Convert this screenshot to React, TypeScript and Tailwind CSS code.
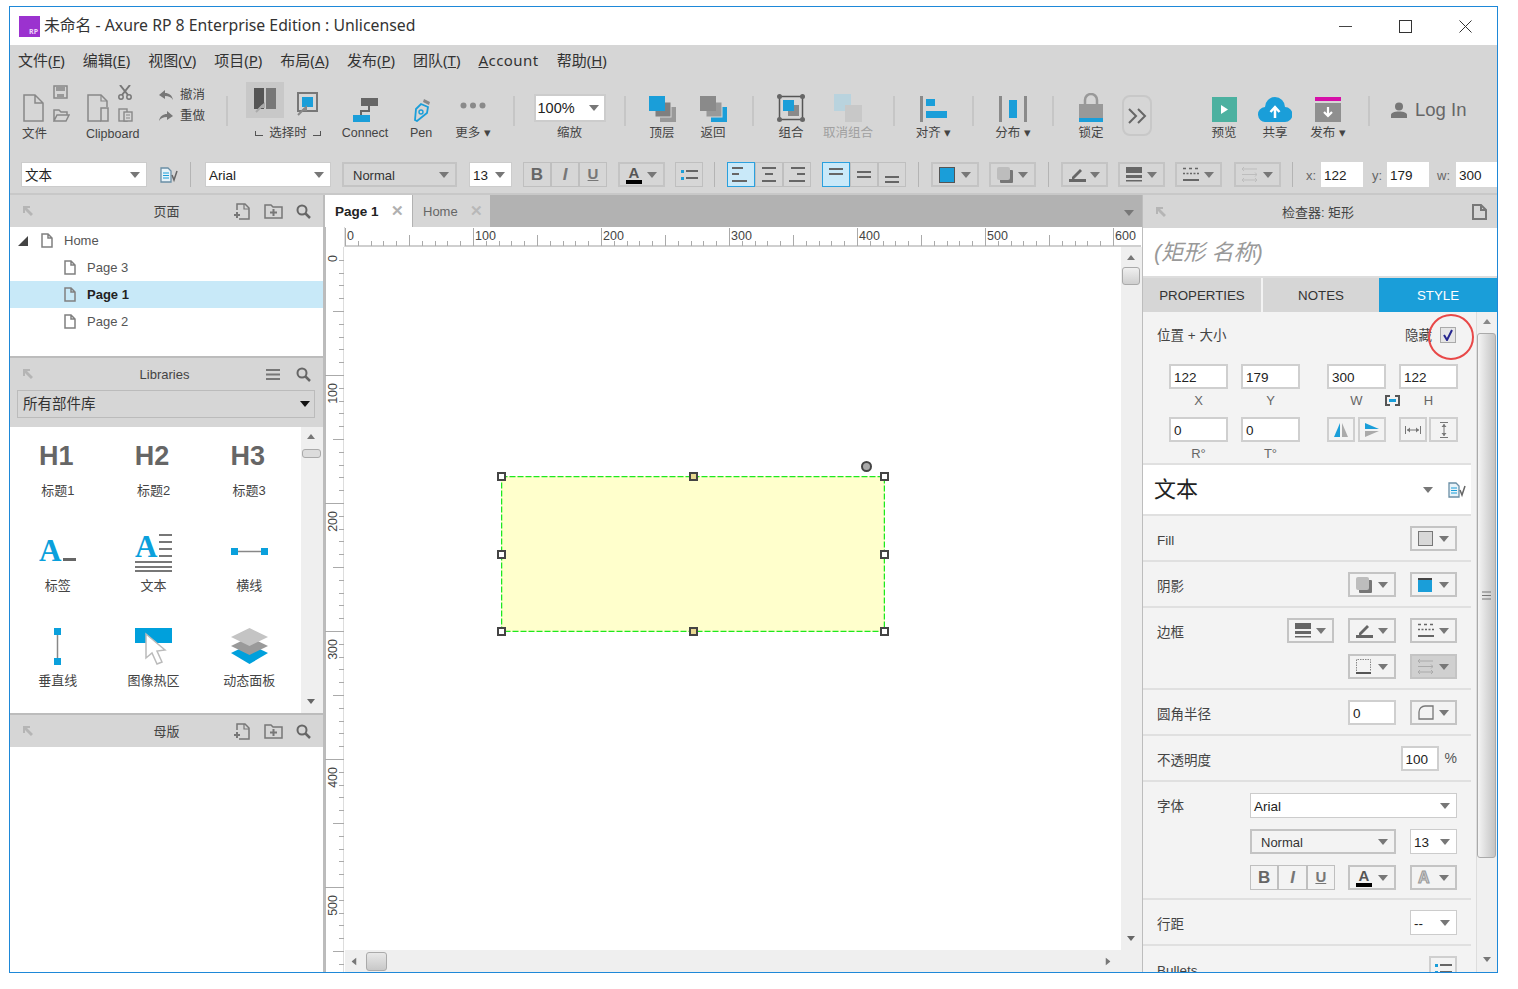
import React from 'react';

const BLUE = '#1a9ed9';

function Tri({ color = '#777', small }: { color?: string; small?: boolean }) {
  const w = small ? 8 : 10;
  const h = small ? 5 : 6;
  return (
    <svg width={w} height={h} viewBox={`0 0 ${w} ${h}`} className="shrink-0">
      <path d={`M0 0h${w}L${w / 2} ${h}z`} fill={color} />
    </svg>
  );
}

function Icon({ w, h, children }: { w: number; h: number; children: React.ReactNode }) {
  return (
    <svg width={w} height={h} viewBox={`0 0 ${w} ${h}`} className="shrink-0 block">
      {children}
    </svg>
  );
}

function PageIcon({ w = 12, h = 15, color = '#808080', sw = 1.5 }: { w?: number; h?: number; color?: string; sw?: number }) {
  const fold = Math.round(w * 0.36);
  return (
    <Icon w={w} h={h}>
      <path
        d={`M1 1H${w - fold - 1}L${w - 1} ${fold + 1}V${h - 1}H1Z M${w - fold - 1} 1V${fold + 1}H${w - 1}`}
        fill="none"
        stroke={color}
        strokeWidth={sw}
      />
    </Icon>
  );
}

function Pin() {
  return (
    <Icon w={12} h={12}>
      <path d="M1 1h7v2H5l6 6-2 2-6-6v3H1z" fill="#b5b5b5" />
    </Icon>
  );
}

function AddPage() {
  return (
    <Icon w={16} h={17}>
      <path d="M3 7V1h8l4 4v11H5" fill="none" stroke="#777" strokeWidth="1.5" />
      <path d="M10 1v5h5" fill="none" stroke="#777" strokeWidth="1.2" />
      <path d="M3 9v6M0 12h6" stroke="#777" strokeWidth="2" />
    </Icon>
  );
}

function AddFolder() {
  return (
    <Icon w={19} h={16}>
      <path d="M1 2h6l2 2h9v11H1z" fill="none" stroke="#777" strokeWidth="1.5" />
      <path d="M9.5 6v7M6 9.5h7" stroke="#777" strokeWidth="2" />
    </Icon>
  );
}

function Search() {
  return (
    <Icon w={15} h={15}>
      <circle cx="6" cy="6" r="4.5" fill="none" stroke="#666" strokeWidth="2" />
      <path d="M9.5 9.5L14 14" stroke="#666" strokeWidth="2.5" />
    </Icon>
  );
}

function PanelHeader({ title, right, className }: { title: string; right: React.ReactNode; className: string }) {
  return (
    <div className={`grid grid-cols-[1fr_auto_1fr] items-center bg-[#d6d6d6] shrink-0 ${className}`}>
      <div className="pl-[12px]">
        <Pin />
      </div>
      <div className="text-[13px] text-[#444] pt-[2px]">{title}</div>
      <div className="flex items-center justify-end">{right}</div>
    </div>
  );
}

function EditDoc() {
  return (
    <Icon w={18} h={16}>
      <path d="M1 1h7l3 3v11H1z" fill="#e8f3f9" stroke="#6a8ea5" strokeWidth="1.3" />
      <path d="M3 6h6M3 8.5h6M3 11h6" stroke={BLUE} strokeWidth="1" />
      <path d="M12 8l2 5 3-9" fill="none" stroke="#666" strokeWidth="1.5" />
    </Icon>
  );
}

// toolbar cell: icon on top, caption below
function Tool({ className, label, dim, children }: { className: string; label: string; dim?: boolean; children: React.ReactNode }) {
  return (
    <div className={`flex flex-col items-center shrink-0 ${className}`}>
      <div className="h-[38px] flex items-end justify-center">{children}</div>
      <div className={`h-[20px] pt-[2px] flex items-center whitespace-nowrap text-[12.5px] ${dim ? 'text-[#a0a0a0]' : 'text-[#444]'}`}>{label}</div>
    </div>
  );
}

function Sep({ className }: { className: string }) {
  return <div className={`w-[2px] h-[30px] mt-[12px] bg-[#c6c6c6] shrink-0 ${className}`} />;
}

function FmtSep({ className }: { className: string }) {
  return <div className={`w-[1px] h-[25px] bg-[#b4b4b4] shrink-0 ${className}`} />;
}

function Drop({ className, children, bg = '' }: { className: string; children: React.ReactNode; bg?: string }) {
  return (
    <div className={`h-[25px] flex items-center justify-between pl-[6px] pr-[6px] border-2 border-[#c4c4c4] shrink-0 ${bg} ${className}`}>
      {children}
      <Tri />
    </div>
  );
}

function Sel({ className, text }: { className: string; text: string }) {
  return (
    <div className={`h-[25px] flex items-center justify-between pl-[3px] pr-[6px] bg-white border border-[#ccc] shrink-0 text-[13.5px] text-[#222] ${className}`}>
      <span className="pt-[3px]">{text}</span>
      <Tri />
    </div>
  );
}

function Seg({ className, children, active }: { className?: string; children: React.ReactNode; active?: boolean }) {
  return (
    <div
      className={`h-[25px] flex items-center justify-center flex-1 border ${
        active ? 'border-[#2aa0de] bg-[#c9e9f9]' : 'border-[#bfbfbf]'
      } ${className ?? ''}`}
    >
      {children}
    </div>
  );
}

function Bius() {
  return (
    <>
      <Seg><span className="font-bold text-[17px] text-[#666]">B</span></Seg>
      <Seg><span className="font-bold italic text-[17px] text-[#777]">I</span></Seg>
      <Seg><span className="font-bold text-[15px] text-[#777] underline">U</span></Seg>
    </>
  );
}

function FontColor() {
  return (
    <div className="flex flex-col items-center leading-none">
      <span className="font-bold text-[15px] text-[#555] leading-[14px]">A</span>
      <span className="w-[16px] h-[4px] bg-black" />
    </div>
  );
}

function AlignLines({ lines }: { lines: [number, number, number][] }) {
  return (
    <Icon w={18} h={17}>
      {lines.map(([x, y, w], i) => (
        <rect key={i} x={x} y={y} width={w} height="2" fill="#666" />
      ))}
    </Icon>
  );
}

function Bullets() {
  return (
    <Icon w={17} h={12}>
      <rect x="0" y="1" width="3" height="3" fill={BLUE} />
      <rect x="0" y="8" width="3" height="3" fill={BLUE} />
      <rect x="5" y="1" width="12" height="2" fill="#666" />
      <rect x="5" y="8" width="12" height="2" fill="#666" />
    </Icon>
  );
}

function ShadowSq() {
  return (
    <Icon w={16} h={16}>
      <rect x="3" y="3" width="13" height="13" rx="1" fill="#777" />
      <rect x="0" y="0" width="13" height="13" rx="2" fill="#bdbdbd" />
    </Icon>
  );
}

function LineColor() {
  return (
    <Icon w={17} h={15}>
      <path d="M3 10L11 2l2 2-8 8H3z" fill="#666" />
      <rect x="0" y="12" width="17" height="3" fill="#666" />
    </Icon>
  );
}

function Thick() {
  return (
    <Icon w={16} h={15}>
      <rect x="0" y="0" width="16" height="6" fill="#666" />
      <rect x="0" y="8" width="16" height="3" fill="#666" />
      <rect x="0" y="13" width="16" height="1.5" fill="#666" />
    </Icon>
  );
}

function Dotted() {
  return (
    <Icon w={16} h={15}>
      <path d="M0 1.500h16" stroke="#666" strokeWidth="1.500" strokeDasharray="3 3" />
      <path d="M0 6.500h16" stroke="#666" strokeWidth="1.500" strokeDasharray="2 1.500" />
      <rect x="0" y="12" width="16" height="2" fill="#666" />
    </Icon>
  );
}

function ArrowLines({ color = '#bdbdbd' }: { color?: string }) {
  return (
    <Icon w={15} h={15}>
      <path d="M0 2h15M0 7.500h15M0 13h15" stroke={color} strokeWidth="1" />
      <path d="M2 0L0 2l2 2M13 5.500l2 2-2 2M2 11l-2 2 2 2M13 11l2 2-2 2" fill="none" stroke={color} strokeWidth="1" />
    </Icon>
  );
}

function MenuBar() {
  const items: [string, string, string][] = [
    ['文件(', 'F', ')'],
    ['编辑(', 'E', ')'],
    ['视图(', 'V', ')'],
    ['项目(', 'P', ')'],
    ['布局(', 'A', ')'],
    ['发布(', 'P', ')'],
    ['团队(', 'T', ')'],
  ];
  return (
    <div className="h-[30px] bg-[#d6d6d6] flex items-center gap-[18px] pl-[8px] text-[15px] text-[#333] shrink-0 font-['Noto_Sans','Noto_Sans_CJK_SC',sans-serif]">
      {items.map(([a, b, c], i) => (
        <span key={i}>
          {a}
          <span className="underline">{b}</span>
          {c}
        </span>
      ))}
      <span className="tracking-[0.45px]">
        <span className="underline">A</span>ccount
      </span>
      <span>
        帮助(<span className="underline">H</span>)
      </span>
    </div>
  );
}

function Toolbar() {
  return (
    <div className="h-[80px] bg-[#d6d6d6] flex items-start pt-[9px] shrink-0">
      {/* file */}
      <div className="w-[68px] pl-[13px] shrink-0">
        <div className="h-[38px] flex items-end gap-[9px]">
          <PageIcon w={21} h={28} color="#888" />
          <div className="flex flex-col gap-[10px]">
            <Icon w={15} h={14}>
              <path d="M1 1h13v12H1z" fill="none" stroke="#888" strokeWidth="1.5" />
              <rect x="3" y="1" width="9" height="5" fill="#999" />
              <rect x="4" y="9" width="7" height="3" fill="#999" />
            </Icon>
            <Icon w={17} h={13}>
              <path d="M1 12V1h5l2 2h6v3M1 12l3-6h12l-3 6z" fill="none" stroke="#888" strokeWidth="1.5" />
            </Icon>
          </div>
        </div>
        <div className="h-[20px] flex items-center text-[12.5px] text-[#444] -ml-[1px] pt-[5px]">文件</div>
      </div>
      {/* clipboard */}
      <div className="w-[67px] pl-[9px] shrink-0">
        <div className="h-[38px] flex items-end gap-[9px]">
          <Icon w={22} h={28}>
            <path d="M14 27H1V1H14L20 7V13" fill="none" stroke="#888" strokeWidth="1.500" />
            <path d="M14 1V7H20" fill="none" stroke="#888" strokeWidth="1.200" />
            <rect x="14" y="14" width="7" height="13" fill="none" stroke="#888" strokeWidth="1.500" />
          </Icon>
          <div className="flex flex-col gap-[8px]">
            <Icon w={14} h={15}>
              <path d="M2 0l8 10M12 0L4 10" stroke="#777" strokeWidth="2" />
              <circle cx="3" cy="12" r="2.200" fill="none" stroke="#777" strokeWidth="1.500" />
              <circle cx="11" cy="12" r="2.200" fill="none" stroke="#777" strokeWidth="1.500" />
            </Icon>
            <Icon w={15} h={14}>
              <rect x="1" y="1" width="8" height="12" fill="none" stroke="#888" strokeWidth="1.400" />
              <rect x="6" y="4" width="8" height="9" fill="#d6d6d6" stroke="#888" strokeWidth="1.400" />
              <path d="M8 7h4M8 10h4" stroke="#888" />
            </Icon>
          </div>
        </div>
        <div className="h-[20px] flex items-center text-[12.5px] text-[#444] -ml-[1px] pt-[5px] whitespace-nowrap">Clipboard</div>
      </div>
      {/* undo redo */}
      <div className="w-[81px] pl-[14px] pt-[4px] flex flex-col gap-[6px] shrink-0 text-[12.5px] text-[#444]">
        <div className="flex items-center gap-[7px] h-[15px]">
          <Icon w={14} h={11}>
            <path d="M0 5L6 0v3c4 0 7 2 8 7-2-3-4-4-8-4v3z" fill="#777" />
          </Icon>
          <span>撤消</span>
        </div>
        <div className="flex items-center gap-[7px] h-[15px]">
          <Icon w={14} h={11}>
            <path d="M14 5L8 0v3C4 3 1 5 0 10c2-3 4-4 8-4v3z" fill="#777" />
          </Icon>
          <span>重做</span>
        </div>
      </div>
      <Sep className="mt-[12px]" />
      {/* selection mode */}
      <div className="w-[84px] ml-[18px] flex flex-col shrink-0 -mt-[6px]">
        <div className="h-[44px] flex items-center">
          <div className="w-[38px] h-[36px] bg-[#c8c8c8] flex items-center justify-center">
            <Icon w={22} h={25}>
              <rect x="0" y="0" width="10" height="21" fill="#555" />
              <rect x="12" y="0" width="10" height="21" fill="#777" />
              <path d="M2 24l7-7" stroke="#aaa" strokeWidth="2" />
              <path d="M11 14v6h-6z" fill="#aaa" />
            </Icon>
          </div>
          <div className="ml-[13px] mt-[8px]">
            <Icon w={21} h={24}>
              <rect x="1" y="1" width="19" height="18" fill="none" stroke="#777" strokeWidth="2" />
              <rect x="5" y="5" width="11" height="10" fill={BLUE} />
              <path d="M1 23l7-7" stroke="#888" strokeWidth="2" />
              <path d="M10 13v6H4z" fill="#888" />
            </Icon>
          </div>
        </div>
        <div className="h-[20px] pt-[2px] flex items-center justify-center gap-[6px] text-[12.5px] text-[#444]">
          <span className="w-[8px] h-[5px] border-l border-b border-[#555]" />
          <span>选择时</span>
          <span className="w-[8px] h-[5px] border-r border-b border-[#555]" />
        </div>
      </div>
      <Tool className="w-[70px]" label="Connect">
        <Icon w={25} h={24}>
          <rect x="8" y="0" width="17" height="8" fill="#666" />
          <rect x="0" y="17" width="17" height="7" fill={BLUE} />
          <path d="M16 8v5H8v4" fill="none" stroke="#666" strokeWidth="2" />
        </Icon>
      </Tool>
      <Tool className="w-[42px]" label="Pen">
        <Icon w={19} h={24}>
          <path d="M12 1l6 3-1 3-6-3z" fill="#888" />
          <path d="M9 6l7 3-1 6-10 8-2-1 1-11z" fill="none" stroke={BLUE} strokeWidth="1.800" />
          <circle cx="9" cy="14" r="2" fill="none" stroke={BLUE} strokeWidth="1.400" />
        </Icon>
      </Tool>
      <Tool className="w-[62px]" label="更多 ▾">
        <div className="pb-[13px]">
          <Icon w={26} h={7}>
            <circle cx="3.500" cy="3.500" r="3" fill="#8a8a8a" />
            <circle cx="13" cy="3.500" r="3" fill="#8a8a8a" />
            <circle cx="22.500" cy="3.500" r="3" fill="#8a8a8a" />
          </Icon>
        </div>
      </Tool>
      <Sep className="ml-[9px]" />
      <Tool className="w-[109px]" label="缩放">
        <div className="w-[72px] h-[28px] bg-white border-2 border-[#ccc] flex items-center justify-between pl-[2px] pr-[5px] text-[14.5px] text-[#222]">
          <span className="pt-[2px]">100%</span>
          <Tri />
        </div>
      </Tool>
      <Sep className="" />
      <Tool className="w-[72px]" label="顶层">
        <Icon w={27} h={26}>
          <rect x="11" y="11" width="16" height="15" fill="#999" />
          <rect x="6" y="6" width="16" height="15" fill="#7f7f7f" stroke="#d6d6d6" />
          <rect x="0" y="0" width="16" height="15" fill={BLUE} />
        </Icon>
      </Tool>
      <Tool className="w-[30px]" label="返回">
        <Icon w={27} h={26}>
          <rect x="11" y="11" width="16" height="15" fill={BLUE} />
          <rect x="6" y="6" width="16" height="15" fill="#999" stroke="#d6d6d6" />
          <rect x="0" y="0" width="16" height="15" fill="#8a8a8a" />
        </Icon>
      </Tool>
      <Sep className="ml-[24px]" />
      <Tool className="w-[74px]" label="组合">
        <Icon w={28} h={28}>
          <rect x="2.500" y="2.500" width="23" height="23" fill="none" stroke="#555" strokeWidth="1.500" />
          <circle cx="2.500" cy="2.500" r="2.500" fill="#666" />
          <circle cx="25.500" cy="2.500" r="2.500" fill="#666" />
          <circle cx="2.500" cy="25.500" r="2.500" fill="#666" />
          <circle cx="25.500" cy="25.500" r="2.500" fill="#666" />
          <rect x="11" y="11" width="11" height="11" fill="#8a8a8a" />
          <rect x="6" y="6" width="11" height="11" fill={BLUE} />
        </Icon>
      </Tool>
      <Tool className="w-[40px]" label="取消组合" dim>
        <Icon w={29} h={28}>
          <rect x="0" y="0" width="17" height="17" fill="#b9d3de" />
          <rect x="11" y="11" width="17" height="17" fill="#c8c8c8" />
        </Icon>
      </Tool>
      <Sep className="ml-[25px]" />
      <Tool className="w-[77px]" label="对齐 ▾">
        <Icon w={27} h={26}>
          <rect x="0" y="0" width="3" height="26" fill="#8a8a8a" />
          <rect x="6" y="3" width="9" height="7" fill={BLUE} />
          <rect x="6" y="15" width="21" height="7" fill={BLUE} />
        </Icon>
      </Tool>
      <Sep className="" />
      <Tool className="w-[78px]" label="分布 ▾">
        <Icon w={28} h={26}>
          <rect x="0" y="0" width="3" height="26" fill="#8a8a8a" />
          <rect x="10" y="4" width="8" height="18" fill={BLUE} />
          <rect x="25" y="0" width="3" height="26" fill="#8a8a8a" />
        </Icon>
      </Tool>
      <Sep className="" />
      <Tool className="w-[36px] ml-[19px]" label="锁定">
        <Icon w={24} h={29}>
          <path d="M6 12V7a6 6 0 0112 0v5" fill="none" stroke="#999" strokeWidth="2.500" />
          <rect x="0" y="11" width="24" height="14" fill="#999" />
          <rect x="0" y="25" width="24" height="4" fill={BLUE} />
        </Icon>
      </Tool>
      <div className="w-[30px] h-[41px] ml-[13px] mt-[11px] rounded-[8px] border-2 border-[#c8c8c8] flex items-center justify-center shrink-0">
        <Icon w={19} h={16}>
          <path d="M1 1l7 7-7 7M10 1l7 7-7 7" fill="none" stroke="#666" strokeWidth="2" />
        </Icon>
      </div>
      <Tool className="w-[40px] ml-[52px]" label="预览">
        <Icon w={25} h={25}>
          <rect width="25" height="25" fill="#4cb1a0" />
          <path d="M9 8l7 4.500L9 17z" fill="#fff" />
        </Icon>
      </Tool>
      <Tool className="w-[62px]" label="共享">
        <Icon w={34} h={25}>
          <path d="M8 25a7.500 7.500 0 01-1-15 10 10 0 0120 0 7.500 7.500 0 010 15z" fill={BLUE} />
          <path d="M17 21V11M12.500 15l4.500-5 4.500 5" fill="none" stroke="#fff" strokeWidth="2.500" />
        </Icon>
      </Tool>
      <Tool className="w-[44px]" label="发布 ▾">
        <Icon w={26} h={25}>
          <rect width="26" height="4" fill="#d60fa8" />
          <rect y="6" width="26" height="19" fill="#8f8f8f" />
          <path d="M13 10v9M9 15l4 4 4-4" fill="none" stroke="#fff" strokeWidth="2.200" />
        </Icon>
      </Tool>
      <Sep className="ml-[18px]" />
      <div className="ml-[21px] mt-[12px] flex items-center gap-[8px] text-[18.5px] text-[#666] shrink-0">
        <Icon w={16} h={16}>
          <circle cx="8" cy="4.500" r="4" fill="#777" />
          <path d="M0 16v-3c0-2 3-3.500 8-3.500s8 1.500 8 3.500v3z" fill="#777" />
        </Icon>
        <span>Log In</span>
      </div>
    </div>
  );
}

function FormatBar() {
  return (
    <div className="h-[40px] bg-[#d6d6d6] flex items-start pt-[7px] shrink-0 text-[#222] border-b-2 border-[#c8c8c8]">
      <Sel className="w-[126px] ml-[11px]" text="文本" />
      <div className="ml-[13px] mt-[5px] shrink-0">
        <EditDoc />
      </div>
      <FmtSep className="ml-[12px]" />
      <Sel className="w-[126px] ml-[14px]" text="Arial" />
      <Drop className="w-[115px] ml-[11px] text-[13px] text-[#333]">
        <span className="pl-[3px] pt-[3px]">Normal</span>
      </Drop>
      <Sel className="w-[43px] ml-[12px]" text="13" />
      <div className="w-[84px] ml-[11px] flex shrink-0">
        <Bius />
      </div>
      <Drop className="w-[47px] ml-[11px]">
        <FontColor />
      </Drop>
      <div className="w-[28px] ml-[10px] flex shrink-0">
        <Seg><Bullets /></Seg>
      </div>
      <FmtSep className="ml-[11px]" />
      <div className="w-[84px] ml-[12px] flex shrink-0">
        <Seg active><AlignLines lines={[[0, 1, 11], [0, 7, 7], [0, 14, 15]]} /></Seg>
        <Seg><AlignLines lines={[[2, 1, 14], [5, 7, 8], [2, 14, 14]]} /></Seg>
        <Seg><AlignLines lines={[[3, 1, 14], [9, 7, 8], [1, 14, 16]]} /></Seg>
      </div>
      <div className="w-[84px] ml-[11px] flex shrink-0">
        <Seg active><AlignLines lines={[[2, 2, 14], [2, 7, 14]]} /></Seg>
        <Seg><AlignLines lines={[[2, 5, 14], [2, 10, 14]]} /></Seg>
        <Seg><AlignLines lines={[[2, 10, 14], [2, 15, 14]]} /></Seg>
      </div>
      <FmtSep className="ml-[12px]" />
      <Drop className="w-[48px] ml-[12px]">
        <span className="w-[16px] h-[16px] bg-[#1a9ed9] border border-[#555]" />
      </Drop>
      <Drop className="w-[47px] ml-[10px]">
        <ShadowSq />
      </Drop>
      <FmtSep className="ml-[12px]" />
      <Drop className="w-[47px] ml-[12px]">
        <LineColor />
      </Drop>
      <Drop className="w-[47px] ml-[10px]">
        <Thick />
      </Drop>
      <Drop className="w-[47px] ml-[10px]">
        <Dotted />
      </Drop>
      <Drop className="w-[47px] ml-[12px]">
        <ArrowLines />
      </Drop>
      <FmtSep className="ml-[11px]" />
      <span className="w-[15px] ml-[13px] h-[25px] pt-[3px] flex items-center text-[13px] text-[#666] shrink-0">x:</span>
      <div className="w-[42px] h-[25px] bg-white pl-[3px] pt-[3px] flex items-center text-[13.5px] shrink-0">122</div>
      <span className="w-[15px] ml-[9px] h-[25px] pt-[3px] flex items-center text-[13px] text-[#666] shrink-0">y:</span>
      <div className="w-[42px] h-[25px] bg-white pl-[3px] pt-[3px] flex items-center text-[13.5px] shrink-0">179</div>
      <span className="w-[19px] ml-[8px] h-[25px] pt-[3px] flex items-center text-[13px] text-[#666] shrink-0">w:</span>
      <div className="w-[41px] h-[25px] bg-white pl-[3px] pt-[3px] flex items-center text-[13.5px] shrink-0">300</div>
    </div>
  );
}

function TreeRow({ label, sub, active, open }: { label: string; sub?: boolean; active?: boolean; open?: boolean }) {
  return (
    <div className={`h-[27px] flex items-center ${active ? 'bg-[#c8e9f8]' : ''}`}>
      {open && (
        <span className="ml-[8px] mr-[13px]">
          <Icon w={10} h={10}>
            <path d="M10 0v10H0z" fill="#444" />
          </Icon>
        </span>
      )}
      <span className={sub ? 'ml-[54px]' : ''}>
        <PageIcon />
      </span>
      <span className={`ml-[11px] text-[13px] ${active ? 'font-bold text-[#222]' : 'text-[#555]'}`}>{label}</span>
    </div>
  );
}

function LibItem({ icon, label }: { icon: React.ReactNode; label: string }) {
  return (
    <div className="h-[70px] flex flex-col items-center">
      <div className="h-[46px] flex items-center justify-center">{icon}</div>
      <div className="h-[24px] flex items-center text-[13px] text-[#444] whitespace-nowrap">{label}</div>
    </div>
  );
}

function HeadIcon({ text }: { text: string }) {
  return <span className="font-bold text-[27px] text-[#666] leading-none -ml-[3px]">{text}</span>;
}

function LeftPanel() {
  return (
    <div className="w-[313px] flex flex-col shrink-0 bg-white">
      <PanelHeader
        title="页面"
        className="h-[32px]"
        right={
          <div className="flex items-center pr-[12px]">
            <AddPage />
            <span className="ml-[14px]"><AddFolder /></span>
            <span className="ml-[13px]"><Search /></span>
          </div>
        }
      />
      <div className="h-[129px] shrink-0 pl-0">
        <TreeRow label="Home" open />
        <TreeRow label="Page 3" sub />
        <TreeRow label="Page 1" sub active />
        <TreeRow label="Page 2" sub />
      </div>
      <div className="h-[2px] bg-[#bcbcbc] shrink-0" />
      <PanelHeader
        title="Libraries"
        className="h-[32px] pr-[4px]"
        right={
          <div className="flex items-center pr-[8px]">
            <Icon w={14} h={13}>
              <path d="M0 2h14M0 6.500h14M0 11h14" stroke="#777" strokeWidth="2" />
            </Icon>
            <span className="ml-[16px]"><Search /></span>
          </div>
        }
      />
      <div className="h-[37px] bg-[#d6d6d6] pl-[7px] shrink-0">
        <div className="w-[298px] h-[28px] border border-[#bbb] flex items-center justify-between pl-[5px] pr-[4px] text-[14.5px] text-[#333]">
          <span className="pt-[2px]">所有部件库</span>
          <Tri color="#111" />
        </div>
      </div>
      <div className="h-[286px] flex shrink-0">
        <div className="w-[291px] pr-[4px] grid grid-cols-3 content-start gap-y-[25px] pt-[6px]">
          <LibItem icon={<HeadIcon text="H1" />} label="标题1" />
          <LibItem icon={<HeadIcon text="H2" />} label="标题2" />
          <LibItem icon={<HeadIcon text="H3" />} label="标题3" />
          <LibItem
            icon={
              <Icon w={37} h={46}>
                <text x="0" y="33" fontFamily="'Liberation Serif',serif" fontWeight="bold" fontSize="31" fill="#0aa0dc">A</text>
                <rect x="24" y="30" width="13" height="3" fill="#666" />
              </Icon>
            }
            label="标签"
          />
          <LibItem
            icon={
              <Icon w={37} h={46}>
                <text x="0" y="29" fontFamily="'Liberation Serif',serif" fontWeight="bold" fontSize="31" fill="#0aa0dc">A</text>
                <path d="M24 7h13M24 14h13M24 21h13M24 28h13M0 34h37M0 39h37M0 43h37" stroke="#777" strokeWidth="2" />
              </Icon>
            }
            label="文本"
          />
          <LibItem
            icon={
              <Icon w={37} h={7}>
                <rect x="0" y="0" width="7" height="7" fill="#0aa0dc" />
                <rect x="30" y="0" width="7" height="7" fill="#0aa0dc" />
                <path d="M7 3.500h23" stroke="#888" strokeWidth="1.500" />
              </Icon>
            }
            label="横线"
          />
          <LibItem
            icon={
              <Icon w={7} h={37}>
                <rect x="0" y="0" width="7" height="7" fill="#0aa0dc" />
                <rect x="0" y="30" width="7" height="7" fill="#0aa0dc" />
                <path d="M3.500 7v23" stroke="#888" strokeWidth="1.500" />
              </Icon>
            }
            label="垂直线"
          />
          <LibItem
            icon={
              <Icon w={37} h={37}>
                <rect x="0" y="0" width="37" height="15" fill="#00a0dc" />
                <path d="M11 6v24l6-5 5 11 5-2-5-11 8-1z" fill="#fff" stroke="#bbb" strokeWidth="1.500" />
              </Icon>
            }
            label="图像热区"
          />
          <LibItem
            icon={
              <Icon w={37} h={37}>
                <path d="M0 25l18.500-9L37 25l-18.500 11z" fill="#00a0dc" />
                <path d="M0 18l18.500-9L37 18l-18.500 9z" fill="#9a9a9a" />
                <path d="M0 9L18.500 0 37 9l-18.500 9z" fill="#c4c4c4" />
              </Icon>
            }
            label="动态面板"
          />
        </div>
        <div className="w-[22px] bg-[#efefef] flex flex-col items-center justify-between pt-[7px] pb-[9px] pr-[2px]">
          <div className="flex flex-col items-center gap-[10px]">
            <span className="rotate-180"><Tri color="#777" small /></span>
            <span className="w-[19px] h-[9px] rounded-[3px] border border-[#aaa] bg-[#dcdcdc]" />
          </div>
          <Tri color="#666" small />
        </div>
      </div>
      <PanelHeader
        title="母版"
        className="h-[34px] border-t-2 border-[#bcbcbc]"
        right={
          <div className="flex items-center pr-[12px]">
            <AddPage />
            <span className="ml-[14px]"><AddFolder /></span>
            <span className="ml-[13px]"><Search /></span>
          </div>
        }
      />
      <div className="flex-1 bg-white" />
    </div>
  );
}

const TOP_MAJORS = [0, 1, 2, 3, 4, 5, 6];
const SIDE_MAJORS = [0, 1, 2, 3, 4, 5];
const MINOR = [1, 2, 3, 4, 6, 7, 8, 9];

function TopRuler() {
  return (
    <svg width="796" height="20" viewBox="0 0 796 20" className="block">
      <rect x="0" y="18" width="796" height="2" fill="#cfcfcf" />
      {TOP_MAJORS.map(n => (
        <g key={n}>
          <path d={`M${128 * n + 0.5} 1V19`} stroke="#aaa" />
          {n < 6 && <path d={`M${128 * n + 64.5} 8V19`} stroke="#aaa" />}
          {n < 6 &&
            MINOR.map(m => (
              <path key={m} d={`M${Math.round(128 * n + 12.8 * m) + 0.5} 14V19`} stroke="#aaa" />
            ))}
          <text x={128 * n + 2} y="13" fontSize="12.5" fill="#444" fontFamily="'Liberation Sans',sans-serif">
            {n * 100}
          </text>
        </g>
      ))}
    </svg>
  );
}

function SideRuler() {
  return (
    <svg width="20" height="725" viewBox="0 0 20 725" className="block shrink-0">
      <rect x="0" y="0" width="1" height="725" fill="#bbb" />
      <rect x="18" y="0" width="1" height="725" fill="#ddd" />
      {SIDE_MAJORS.map(n => (
        <g key={n}>
          {n > 0 && <path d={`M0 ${128 * n + 0.5}H19`} stroke="#aaa" />}
          <path d={`M8 ${128 * n + 64.5}H19`} stroke="#aaa" />
          {MINOR.map(m => (
            <path key={m} d={`M14 ${Math.round(128 * n + 12.8 * m) + 0.5}H19`} stroke="#aaa" />
          ))}
          <text
            transform={`translate(12 ${128 * n + 8}) rotate(-90)`}
            textAnchor="end"
            fontSize="12.5"
            fill="#444"
            fontFamily="'Liberation Sans',sans-serif"
          >
            {n * 100}
          </text>
        </g>
      ))}
    </svg>
  );
}

function Handle({ className }: { className: string }) {
  return <span className={`absolute w-[9px] h-[9px] border-2 border-[#444] bg-white ${className}`} />;
}

function CenterPanel() {
  return (
    <div className="w-[817px] flex flex-col shrink-0 bg-white">
      <div className="h-[32px] bg-[#b2b2b2] flex shrink-0">
        <div className="w-[87px] bg-white flex items-center pl-[10px] gap-[12px]">
          <span className="font-bold text-[13.5px] text-[#222] pt-[2px]">Page 1</span>
          <span className="text-[#b0b0b0] font-bold text-[15px]">✕</span>
        </div>
        <div className="w-[77px] ml-[1px] bg-[#d6d6d6] flex items-center pl-[10px] gap-[12px]">
          <span className="text-[13px] text-[#666] pt-[2px]">Home</span>
          <span className="text-[#b8b8b8] font-bold text-[15px]">✕</span>
        </div>
        <div className="flex-1 flex items-center justify-end pr-[8px] pt-[4px]">
          <Tri color="#777" />
        </div>
      </div>
      <div className="h-[20px] flex shrink-0">
        <div className="w-[20px] border-r border-[#ddd] border-l border-l-[#bbb]" />
        <TopRuler />
      </div>
      <div className="flex-1 flex min-h-0">
        <SideRuler />
        <div className="flex-1 flex flex-col min-w-0">
          <div className="flex-1 flex min-h-0">
            <div className="flex-1 relative bg-white">
              {/* the widget on the canvas */}
              <div className="absolute left-[156px] top-[229px] w-[384px] h-[156px] bg-[#ffffcc]">
                <svg width="384" height="156" viewBox="0 0 384 156" className="absolute left-0 top-0 block">
                  <rect x="0.5" y="0.5" width="383" height="155" fill="none" stroke="#1ee81e" strokeWidth="1.5" strokeDasharray="6 2" />
                </svg>
                <Handle className="-left-[4px] -top-[4px]" />
                <Handle className="left-[188px] -top-[4px] !bg-[#e8d890]" />
                <Handle className="-right-[4px] -top-[4px]" />
                <Handle className="-left-[4px] top-[74px]" />
                <Handle className="-right-[4px] top-[74px]" />
                <Handle className="-left-[4px] -bottom-[4px]" />
                <Handle className="left-[188px] -bottom-[4px] !bg-[#e8d890]" />
                <Handle className="-right-[4px] -bottom-[4px]" />
                <span className="absolute left-[360px] -top-[15px] w-[11px] h-[11px] rounded-full bg-[#aaa] border-2 border-[#444]" />
              </div>
            </div>
            <div className="w-[21px] bg-[#efefef] flex flex-col items-center justify-between pt-[8px] pb-[9px] pr-[2px]">
              <div className="flex flex-col items-center gap-[7px]">
                <span className="rotate-180"><Tri color="#777" small /></span>
                <span className="w-[18px] h-[18px] rounded-[3px] border border-[#aaa] bg-gradient-to-b from-[#f0f0f0] to-[#cfcfcf]" />
              </div>
              <Tri color="#666" small />
            </div>
          </div>
          <div className="h-[22px] bg-[#efefef] flex items-center justify-between pl-[5px] pr-[30px] shrink-0">
            <div className="flex items-center gap-[8px]">
              <span className="rotate-90"><Tri color="#777" small /></span>
              <span className="w-[21px] h-[19px] rounded-[3px] border border-[#aaa] bg-gradient-to-b from-[#e8e8e8] to-[#c8c8c8]" />
            </div>
            <span className="-rotate-90"><Tri color="#777" small /></span>
          </div>
        </div>
      </div>
    </div>
  );
}

function Field({ className, value }: { className: string; value: string }) {
  return (
    <div className={`h-[25px] bg-white border-2 border-[#cfcfcf] flex items-center pl-[3px] pt-[3px] text-[13.5px] text-[#222] shrink-0 ${className}`}>
      {value}
    </div>
  );
}

function AxisLabel({ className, text }: { className: string; text: string }) {
  return <div className={`text-center text-[13px] text-[#666] shrink-0 ${className}`}>{text}</div>;
}

function IconBtn({ className, children }: { className: string; children: React.ReactNode }) {
  return (
    <div className={`h-[25px] border-2 border-[#cfcfcf] flex items-center justify-center shrink-0 ${className}`}>
      {children}
    </div>
  );
}

function StyleRow({ label, className, children }: { label: string; className?: string; children: React.ReactNode }) {
  return (
    <div className={`flex pl-[14px] pr-[14px] pt-[10px] border-b-2 border-[#e0e0e0] shrink-0 ${className ?? 'h-[46px]'}`}>
      <div className="h-[27px] pt-[3px] flex items-center text-[13.5px] text-[#444] flex-1">{label}</div>
      {children}
    </div>
  );
}

function Position() {
  return (
    <div className="h-[153px] border-b-2 border-[#e0e0e0] shrink-0">
      <div className="h-[48px] flex items-center pl-[14px] pr-[15px] text-[13.5px] text-[#444]">
        <span className="flex-1">位置 + 大小</span>
        <span>隐藏</span>
        <div className="relative ml-[8px] -mt-[2px] w-[16px] h-[16px] bg-[#e6e6e6] border border-[#aaa] flex items-center justify-center">
          <Icon w={12} h={12}>
            <path d="M2 6l3 5 5-10" fill="none" stroke="#26268f" strokeWidth="2" />
          </Icon>
          <span className="absolute -left-[13px] -top-[14px] w-[46px] h-[46px] rounded-full border-2 border-[#e84848]" />
        </div>
      </div>
      <div className="flex mt-[4px] pl-[26px]">
        <Field className="w-[59px]" value="122" />
        <Field className="w-[59px] ml-[13px]" value="179" />
        <Field className="w-[59px] ml-[27px]" value="300" />
        <Field className="w-[59px] ml-[13px]" value="122" />
      </div>
      <div className="flex pl-[26px] h-[24px] items-center">
        <AxisLabel className="w-[59px]" text="X" />
        <AxisLabel className="w-[59px] ml-[13px]" text="Y" />
        <AxisLabel className="w-[59px] ml-[27px]" text="W" />
        <div className="w-[13px] flex justify-center -mt-[2px]">
          <span className="shrink-0">
            <Icon w={15} h={11}>
              <path d="M5 1H1v9h4M10 1h4v9h-4" fill="none" stroke="#555" strokeWidth="2" />
              <rect x="4" y="4" width="7" height="3" fill={BLUE} />
            </Icon>
          </span>
        </div>
        <AxisLabel className="w-[59px]" text="H" />
      </div>
      <div className="flex mt-[4px] pl-[26px]">
        <Field className="w-[59px]" value="0" />
        <Field className="w-[59px] ml-[13px]" value="0" />
        <IconBtn className="w-[28px] ml-[27px]">
          <Icon w={16} h={16}>
            <path d="M7 1v14H1z" fill={BLUE} />
            <path d="M9 1v14h6z" fill="#aaa" />
          </Icon>
        </IconBtn>
        <IconBtn className="w-[28px] ml-[3px]">
          <Icon w={16} h={16}>
            <path d="M1 1l14 6H1z" fill={BLUE} />
            <path d="M1 9h14L1 15z" fill="#aaa" />
          </Icon>
        </IconBtn>
        <IconBtn className="w-[28px] ml-[13px]">
          <Icon w={16} h={8}>
            <path d="M0.500 0v8M15.500 0v8M2 4h12" stroke="#777" />
            <path d="M2 4l3-2.500v5zM14 4l-3-2.500v5z" fill="#777" />
          </Icon>
        </IconBtn>
        <IconBtn className="w-[29px] ml-[2px]">
          <Icon w={8} h={16}>
            <path d="M0 0.500h8M0 15.500h8M4 2v12" stroke="#777" />
            <path d="M4 2L1.500 5h5zM4 14l-2.500-3h5z" fill="#777" />
          </Icon>
        </IconBtn>
      </div>
      <div className="flex pl-[26px] h-[23px] items-center">
        <AxisLabel className="w-[59px]" text="R°" />
        <AxisLabel className="w-[59px] ml-[13px]" text="T°" />
      </div>
    </div>
  );
}

function StyleBody() {
  return (
    <div className="w-[328px] flex flex-col shrink-0">
      <Position />
      <div className="h-[51px] bg-white border-b-2 border-[#e0e0e0] flex items-center pl-[11px] pr-[5px] shrink-0">
        <span className="flex-1 text-[22px] text-[#222]">文本</span>
        <Tri />
        <span className="ml-[15px]"><EditDoc /></span>
      </div>
      <StyleRow label="Fill">
        <Drop className="w-[47px]">
          <span className="w-[15px] h-[15px] bg-[#d8d8d8] border border-[#777]" />
        </Drop>
      </StyleRow>
      <StyleRow label="阴影">
        <div className="flex gap-[14px]">
          <Drop className="w-[48px]"><ShadowSq /></Drop>
          <Drop className="w-[47px]"><span className="w-[14px] h-[14px] bg-[#1a9ed9] border-t-2 border-[#444]" /></Drop>
        </div>
      </StyleRow>
      <StyleRow label="边框" className="h-[82px]">
        <div className="flex flex-col items-end gap-[11px]">
          <div className="flex gap-[14px]">
            <Drop className="w-[47px]"><Thick /></Drop>
            <Drop className="w-[48px]"><LineColor /></Drop>
            <Drop className="w-[47px]"><Dotted /></Drop>
          </div>
          <div className="flex gap-[14px]">
            <Drop className="w-[48px]">
              <Icon w={15} h={15}>
                <path d="M0.500 12V0.500H14.500V12" fill="none" stroke="#888" strokeDasharray="1.500 1" />
                <rect x="0" y="13" width="15" height="2" fill="#555" />
              </Icon>
            </Drop>
            <Drop className="w-[47px]" bg="bg-[#d0d0d0]"><ArrowLines color="#aaa" /></Drop>
          </div>
        </div>
      </StyleRow>
      <StyleRow label="圆角半径">
        <div className="flex gap-[14px]">
          <Field className="w-[48px]" value="0" />
          <Drop className="w-[47px]">
            <Icon w={16} h={15}>
              <path d="M1 14V7a6 6 0 016-6h8v13z" fill="none" stroke="#777" strokeWidth="1.300" />
            </Icon>
          </Drop>
        </div>
      </StyleRow>
      <StyleRow label="不透明度">
        <div className="flex">
          <Field className="w-[38px]" value="100" />
          <span className="ml-[6px] text-[14px] text-[#555] leading-[25px]">%</span>
        </div>
      </StyleRow>
      <div className="h-[118px] border-b-2 border-[#e0e0e0] flex pl-[14px] pr-[14px] pt-[11px] shrink-0">
        <div className="w-[93px] h-[25px] pt-[3px] flex items-center text-[13.5px] text-[#444] shrink-0">字体</div>
        <div className="flex flex-col gap-[11px]">
          <Sel className="w-[207px] pl-[3px]" text="Arial" />
          <div className="flex gap-[14px]">
            <Drop className="w-[146px] text-[13px] text-[#333]">
              <span className="pl-[3px] pt-[3px]">Normal</span>
            </Drop>
            <Sel className="w-[47px]" text="13" />
          </div>
          <div className="flex">
            <div className="w-[85px] flex shrink-0">
              <Bius />
            </div>
            <Drop className="w-[48px] ml-[13px]"><FontColor /></Drop>
            <Drop className="w-[47px] ml-[14px]">
              <span className="font-bold text-[16px] text-[#d0d0d0] [-webkit-text-stroke:1px_#999]">A</span>
            </Drop>
          </div>
        </div>
      </div>
      <StyleRow label="行距">
        <Sel className="w-[47px]" text="--" />
      </StyleRow>
      <StyleRow label="Bullets">
        <IconBtn className="w-[28px]"><Bullets /></IconBtn>
      </StyleRow>
    </div>
  );
}

function RightPanel() {
  return (
    <div className="w-[355px] flex flex-col shrink-0 border-l border-[#bdbdbd] bg-[#f3f3f3]">
      <PanelHeader
        title="检查器: 矩形"
        className="h-[33px] pr-[4px]"
        right={
          <div className="pr-[6px]">
            <PageIcon w={15} h={16} color="#777" sw={2} />
          </div>
        }
      />
      <div className="h-[50px] bg-white flex items-center pl-[11px] text-[22px] italic text-[#999] shrink-0 border-b-2 border-[#ddd]">
        (矩形 名称)
      </div>
      <div className="h-[34px] flex text-[13.3px] shrink-0">
        <div className="w-[118px] bg-[#d6d6d6] flex items-center justify-center text-[#333] pt-[2px]">PROPERTIES</div>
        <div className="w-[116px] ml-[2px] bg-[#d6d6d6] flex items-center justify-center text-[#333] pt-[2px]">NOTES</div>
        <div className="flex-1 bg-[#1a9ed9] flex items-center justify-center text-white pt-[2px]">STYLE</div>
      </div>
      <div className="flex-1 flex min-h-0 overflow-hidden">
        <StyleBody />
        <div className="w-[21px] ml-[5px] bg-[#f0f0f0] border-l border-[#ddd] flex flex-col items-center justify-between pt-[7px] pb-[10px] pr-[1px] shrink-0">
          <div className="flex flex-col items-center gap-[9px]">
            <span className="rotate-180"><Tri color="#888" small /></span>
            <div className="w-[19px] h-[525px] rounded-[3px] border border-[#aaa] bg-gradient-to-r from-[#f4f4f4] to-[#c4c4c4] flex items-center justify-center">
              <Icon w={9} h={9}>
                <path d="M0 1h9M0 4.500h9M0 8h9" stroke="#777" />
              </Icon>
            </div>
          </div>
          <Tri color="#777" small />
        </div>
      </div>
    </div>
  );
}

export default function App() {
  return (
    <div className="w-[1518px] h-[989px] bg-white pl-[9px] pt-[6px] overflow-hidden font-['Liberation_Sans','Noto_Sans_CJK_SC',sans-serif]">
      <div className="w-[1489px] h-[967px] border border-[#1e88d8] flex flex-col overflow-hidden bg-white">
        <div className="h-[38px] flex items-center pl-[9px] shrink-0 font-['Noto_Sans','Noto_Sans_CJK_SC',sans-serif] text-[15.8px] text-[#333]">
          <div className="w-[21px] h-[21px] bg-[#9b32cf] flex items-end justify-end pr-[2px] text-[7px] leading-[10px] text-[#f0d8fa] font-bold">RP</div>
          <span className="ml-[4px]">未命名 - Axure RP 8 Enterprise Edition : Unlicensed</span>
          <div className="flex-1 flex items-center justify-end pr-[25px] gap-[47px]">
            <Icon w={13} h={13}>
              <path d="M0 6.500h13" stroke="#444" />
            </Icon>
            <Icon w={13} h={13}>
              <rect x="0.500" y="0.500" width="12" height="12" fill="none" stroke="#333" />
            </Icon>
            <Icon w={13} h={13}>
              <path d="M0.500 0.500l12 12M12.500 0.500l-12 12" stroke="#333" />
            </Icon>
          </div>
        </div>
        <MenuBar />
        <Toolbar />
        <FormatBar />
        <div className="flex-1 flex min-h-0">
          <LeftPanel />
          <div className="w-[2px] bg-[#bcbcbc] shrink-0" />
          <CenterPanel />
          <RightPanel />
        </div>
      </div>
    </div>
  );
}
